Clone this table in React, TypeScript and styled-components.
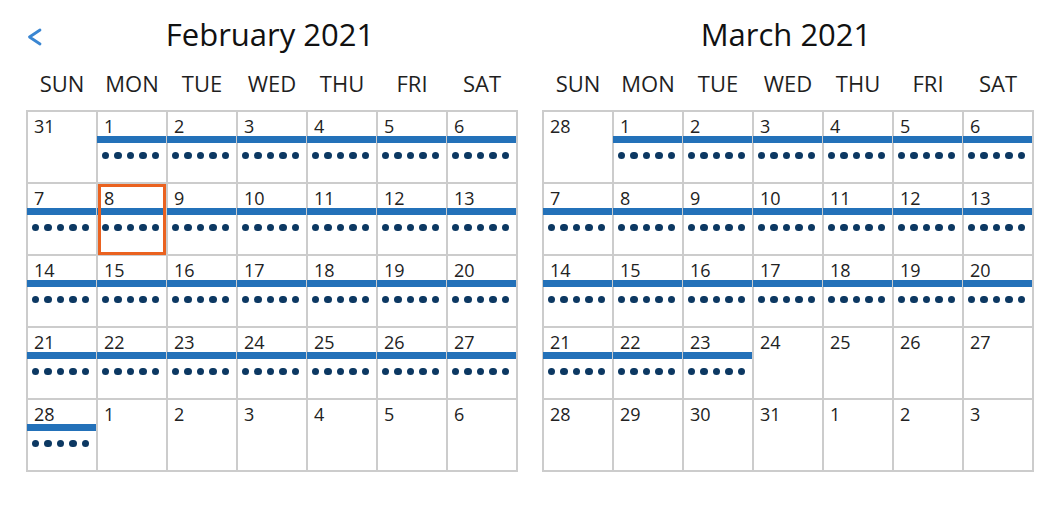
import React from "react";
import styled, { createGlobalStyle } from "styled-components";

const GlobalStyle = createGlobalStyle`
  html, body { margin: 0; padding: 0; background: #fff; }
  body { font-family: "Open Sans", "Noto Sans", sans-serif; color: #1a1a1a; }
`;

const Page = styled.div`
  display: flex;
  gap: 24px;
  padding-left: 26px;
  width: 1064px;
  height: 506px;
  box-sizing: border-box;
`;

const Month = styled.section`
  position: relative;
  width: 492px;
  display: flex;
  flex-direction: column;
`;

const BackButton = styled.button`
  position: absolute;
  left: 0;
  top: 28px;
  width: 18px;
  height: 18px;
  padding: 0;
  border: 0;
  background: transparent;
  cursor: pointer;
  display: flex;
  align-items: center;
  justify-content: center;
`;

const Title = styled.h2`
  margin: 14px 0 0;
  height: 40px;
  font-size: 31px;
  line-height: 40px;
  font-weight: 400;
  text-align: center;
  color: #111;
  padding-right: 4px;
`;

const Weekdays = styled.div`
  display: grid;
  grid-template-columns: repeat(7, 70px);
  padding-left: 1px;
  margin-top: 14px;
`;

const Weekday = styled.div`
  font-size: 22px;
  line-height: 30px;
  text-align: center;
  color: #1f1f1f;
`;

const Grid = styled.div`
  margin-top: 12px;
  display: grid;
  grid-template-columns: repeat(7, 68px);
  grid-auto-rows: 70px;
  gap: 2px;
  padding: 2px;
  background: #cccccc;
  width: 492px;
  box-sizing: border-box;
`;

const Cell = styled.div<{ $selected?: boolean }>`
  position: relative;
  background: #fff;
  display: flex;
  flex-direction: column;
  &::after {
    content: "";
    display: ${(p) => (p.$selected ? "block" : "none")};
    position: absolute;
    inset: 0 0 -1px 0;
    border: 3px solid #ea6220;
    pointer-events: none;
  }
`;

const DayNum = styled.div`
  padding: 4px 0 0 6px;
  font-size: 18px;
  line-height: 20px;
  color: #222;
`;

const Bar = styled.div`
  height: 7px;
  margin-left: -1px;
  background: #2371b9;
`;

const Dots = styled.div`
  display: flex;
  gap: 5px;
  margin: 8.5px 0 0 3.5px;
`;

const Dot = styled.span`
  width: 7.5px;
  height: 7.5px;
  border-radius: 50%;
  background: #0c3862;
`;

type Day = { n: number; avail: boolean; selected?: boolean };

const WEEKDAYS = ["SUN", "MON", "TUE", "WED", "THU", "FRI", "SAT"];

function buildFeb(): Day[] {
  const days: Day[] = [{ n: 31, avail: false }];
  for (let i = 1; i <= 28; i++) days.push({ n: i, avail: true, selected: i === 8 });
  for (let i = 1; i <= 6; i++) days.push({ n: i, avail: false });
  return days;
}

function buildMar(): Day[] {
  const days: Day[] = [{ n: 28, avail: false }];
  for (let i = 1; i <= 31; i++) days.push({ n: i, avail: i <= 23 });
  for (let i = 1; i <= 3; i++) days.push({ n: i, avail: false });
  return days;
}

const Chevron = () => (
  <svg width="18" height="18" viewBox="0 0 18 18" aria-hidden>
    <polyline
      points="14,2 3.5,9 14,16"
      fill="none"
      stroke="#3a86d2"
      strokeWidth="2.8"
      strokeLinecap="round"
      strokeLinejoin="round"
    />
  </svg>
);

const MonthView: React.FC<{ title: string; days: Day[]; showBack?: boolean }> = ({
  title,
  days,
  showBack,
}) => (
  <Month>
    {showBack && (
      <BackButton aria-label="Previous month">
        <Chevron />
      </BackButton>
    )}
    <Title>{title}</Title>
    <Weekdays>
      {WEEKDAYS.map((w) => (
        <Weekday key={w}>{w}</Weekday>
      ))}
    </Weekdays>
    <Grid>
      {days.map((d, i) => (
        <Cell key={i} $selected={d.selected}>
          <DayNum>{d.n}</DayNum>
          {d.avail && (
            <>
              <Bar />
              <Dots>
                {[0, 1, 2, 3, 4].map((k) => (
                  <Dot key={k} />
                ))}
              </Dots>
            </>
          )}
        </Cell>
      ))}
    </Grid>
  </Month>
);

export default function App() {
  return (
    <>
      <GlobalStyle />
      <Page>
        <MonthView title="February 2021" days={buildFeb()} showBack />
        <MonthView title="March 2021" days={buildMar()} />
      </Page>
    </>
  );
}
